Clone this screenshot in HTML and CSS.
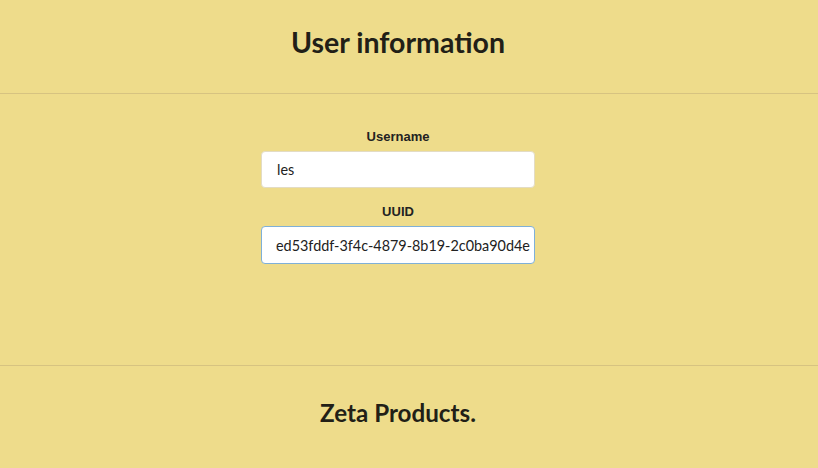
FILE: index.html
```html
<!DOCTYPE html>
<html>
<head>
<meta charset="utf-8">
<link rel="stylesheet" href="styles.css">
</head>
<body>
<header class="header"><h1 class="title">User information</h1></header>
<main class="main">
  <form class="form">
    <label class="label" for="u">Username</label>
    <input class="input" id="u" type="text" value="les">
    <label class="label" for="id">UUID</label>
    <input class="input input-focus" id="id" type="text" value="ed53fddf-3f4c-4879-8b19-2c0ba90d4e">
  </form>
</main>
<footer class="footer"><h2 class="foot-title">Zeta Products.</h2></footer>
</body>
</html>
```
FILE: styles.css
```css
* { box-sizing: border-box; }
html, body { margin: 0; padding: 0; }
body { background: #eedc8b; color: #222; font-family: Lato, "Liberation Sans", sans-serif; height: 468px; overflow: hidden; }
.header { height: 94px; border-bottom: 1px solid #d6c381; display: flex; align-items: center; justify-content: center; padding-right: 22px; }
.title { margin: 0; font-size: 28.5px; font-weight: 700; color: #221f17; padding-bottom: 10px; }
.main { height: 272px; border-bottom: 1px solid #d6c381; display: flex; justify-content: center; padding-top: 35px; padding-right: 22px; }
.form { display: flex; flex-direction: column; align-items: center; width: 274px; }
.label { font-family: "Liberation Sans", Arial, sans-serif; font-weight: 700; font-size: 13px; color: #222; margin-bottom: 7px; }
.input { width: 274px; height: 37px; border: 1px solid #e3dcc4; border-radius: 4px; background: #fff; padding: 0 15px; font-family: Lato, sans-serif; font-size: 14.4px; color: #222; margin-bottom: 16px; outline: none; }
.input-focus { border-color: #7fb0d8; height: 38px; padding: 0 0 0 14px; }
.footer { height: 102px; display: flex; align-items: center; justify-content: center; padding-right: 22px; }
.foot-title { margin: 0; font-size: 24.2px; font-weight: 700; color: #221f17; padding-bottom: 10px; }
```
